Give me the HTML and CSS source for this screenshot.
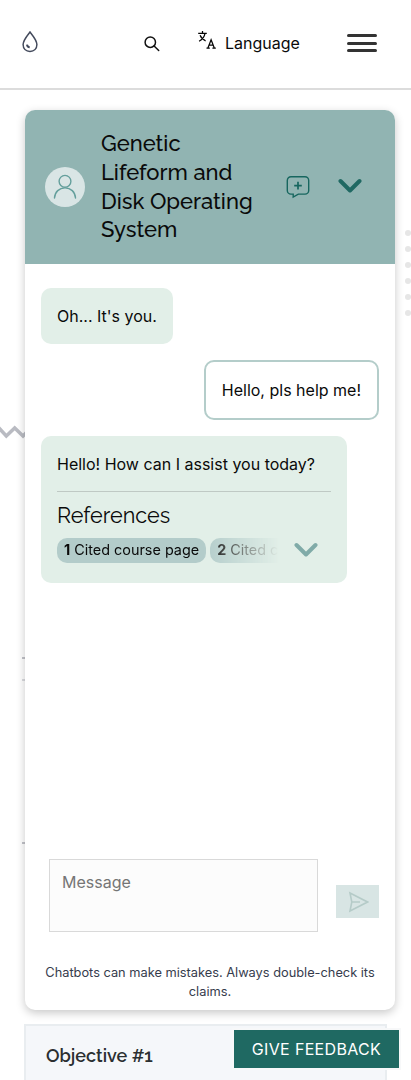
FILE: index.html
```html
<!DOCTYPE html>
<html lang="en">
<head>
<meta charset="utf-8">
<meta name="viewport" content="width=device-width">
<title>Course assistant</title>
<link rel="stylesheet" href="styles.css">
</head>
<body>
<div class="page">
  <header class="topbar">
    <svg class="logo" width="16" height="22" viewBox="0 0 16 22" fill="none" stroke="#434a5c" stroke-width="1.5"><path d="M8 1C5.6 4.2 1.1 9 1.1 13.6c0 4 2.8 6.8 6.9 6.8s6.9-2.800 6.900-6.800C14.900 9 10.400 4.200 8 1z"/><path d="M5 13.700c.2 1.600 1.200 2.500 2.700 2.600" stroke-width="2"/></svg>
    <svg class="search" width="16" height="16" viewBox="0 0 16 16" fill="none" stroke="#111" stroke-width="1.500" stroke-linecap="round"><circle cx="6.300" cy="6.200" r="5.200"/><path d="M10.100 10l4.600 4.500"/></svg>
    <div class="language">
      <svg width="19" height="19" viewBox="0 0 19 19" fill="none" stroke="#050505" stroke-width="1.250"><path d="M.2 2.300h8.600M4.500.1v2.200M7 2.300C6.400 5.600 4.300 8.500 1.100 10.200M2.100 4.300c1 2.500 3 4.500 5.500 5.500"/><path d="M9.900 17l3.200-8.300 3.200 8.300M10.900 14h4.500M8.500 17.200h3.300M14.400 17.200h3.400"/></svg>
      <span>Language</span>
    </div>
    <div class="menu"><i></i><i></i><i></i></div>
  </header>

  <svg class="zigzag" width="30" height="18" viewBox="0 0 30 18" fill="none" stroke="#b9bbc2" stroke-width="3.500"><path d="M-2 2l8.300 9L14.700 3l8.300 8 5-5"/></svg>
  <i class="tick tick-a"></i><i class="tick tick-b"></i><i class="tick tick-c"></i>
  <div class="dots"><i></i><i></i><i></i><i></i><i></i><i></i></div>

  <main class="chat">
    <div class="chat-head">
      <div class="avatar"><svg width="24" height="26" viewBox="0 0 24 26" fill="none" stroke="#649f9c" stroke-width="1.400" stroke-linecap="round"><circle cx="12" cy="7.800" r="5.900"/><path d="M1.500 24.500C1.900 18.300 6.200 14.400 12 14.400s10.100 3.900 10.500 10.100"/></svg></div>
      <h1 class="title">Genetic<br>Lifeform and<br>Disk Operating<br>System</h1>
      <svg class="new-chat" width="24" height="24" viewBox="0 0 24 24" fill="none" stroke="#17665f" stroke-width="1.400"><path d="M5 1.700h14a3.700 3.700 0 0 1 3.700 3.700v10a3.700 3.700 0 0 1-3.700 3.700h-6.700L7.200 22v-2.900H5a3.700 3.700 0 0 1-3.700-3.700v-10A3.700 3.700 0 0 1 5 1.700z"/><path d="M12 6.800v7.600M8.200 10.600h7.600" stroke-width="1.700"/></svg>
      <svg class="chevron" width="24" height="16" viewBox="0 0 24 16" fill="none" stroke="#206963" stroke-width="4" stroke-linecap="round" stroke-linejoin="round"><path d="M2.500 3l9.500 9.500L21.500 3"/></svg>
    </div>
    <div class="messages">
      <div class="bubble bot">Oh... It's you.</div>
      <div class="bubble user">Hello, pls help me!</div>
      <div class="bubble bot answer">
        <p>Hello! How can I assist you today?</p>
        <h2 class="refs-title">References</h2>
        <div class="refs">
          <div class="chips"><span class="chip"><b>1</b> Cited course page</span><span class="chip"><b>2</b> Cited c</span></div>
          <svg class="refs-chevron" width="24" height="16" viewBox="0 0 24 16" fill="none" stroke="#80aba8" stroke-width="4" stroke-linecap="round" stroke-linejoin="round"><path d="M2.500 3l9.500 9.500L21.500 3"/></svg>
        </div>
      </div>
    </div>
    <div class="composer">
      <div class="input">Message</div>
      <div class="send"><svg width="22" height="22" viewBox="0 0 22 22" fill="none" stroke="#b5cbc8" stroke-width="1.600"><path d="M3 2l17.500 9L3 20l1.800-9zM5 11h8"/></svg></div>
    </div>
    <p class="notice">Chatbots can make mistakes. Always double-check its claims.</p>
  </main>

  <section class="objective"><h2>Objective #1</h2></section>
  <div class="feedback">GIVE FEEDBACK</div>
</div>
</body>
</html>
```

FILE: styles.css
```css
* { box-sizing: border-box; }
body { margin: 0; background: #fff; font-family: Inter, "Liberation Sans", sans-serif; color: #0a0a0a; }
h1, h2, p { margin: 0; }
svg { display: block; flex: none; }
.page { position: relative; width: 411px; height: 1080px; overflow: hidden; }
.topbar { height: 90px; border-bottom: 2px solid #dcdcdc; display: flex; align-items: flex-start; }
.logo { margin: 31px 0 0 22px; }
.search { margin: 36px 0 0 106px; }
.language { display: flex; margin: 31px 0 0 38px; width: 103px; gap: 8px; font-size: 16px; line-height: 25px; }
.menu { margin: 34px 0 0 46px; width: 30px; display: grid; gap: 4.500px; }
.menu i { height: 3px; border-radius: 2px; background: #333; }
.zigzag { position: absolute; left: 0; top: 425px; }
.tick { position: absolute; left: 22px; width: 4px; height: 2px; background: #c2c3c9; }
.tick-a { top: 657px; }
.tick-b { top: 679px; background: #dadbdf; }
.tick-c { top: 842px; }
.dots { position: absolute; left: 405px; top: 230px; display: grid; gap: 10px; }
.dots i { width: 6px; height: 6px; border-radius: 50%; background: #e6e6e6; }

.chat { position: relative; margin: 20px 0 0 25px; width: 370px; height: 900px; border-radius: 10px; background: #fff; box-shadow: 0 3px 10px rgba(0, 0, 0, .22); display: flex; flex-direction: column; }
.chat-head { height: 154px; flex: none; background: #91b4b2; border-radius: 10px 10px 0 0; display: flex; align-items: center; padding-left: 20px; }
.avatar { width: 40px; height: 40px; border-radius: 50%; background: #d9e5e5; display: grid; place-items: center; }
.avatar svg { transform: translateY(-.5px); }
.title { margin: -1px 0 0 16px; width: 185px; font: 500 22px/28.600px Raleway, Lato, sans-serif; white-space: nowrap; }
.chevron { margin: -2px 0 0 27.500px; }
.messages { height: 581px; padding: 24px 16px 0; display: flex; flex-direction: column; align-items: flex-start; gap: 16px; }
.bubble { border-radius: 10px; padding: 16px; font-size: 16px; line-height: 24px; white-space: nowrap; }
.bot { background: #e2efe8; }
.user { align-self: flex-end; border: 2px solid #b4cdca; background: #fff; }
.answer { width: 306px; height: 147px; }
.answer p { padding-bottom: 15px; border-bottom: 1px solid #bfc9c4; }
.refs-title { margin-top: 10px; font: 400 21.600px/28px Raleway, Lato, sans-serif; }
.refs { display: flex; align-items: center; margin-top: 7px; height: 26px; }
.chips { width: 222px; height: 25px; display: flex; gap: 4px; -webkit-mask-image: linear-gradient(90deg, #000 66%, transparent 100%); mask-image: linear-gradient(90deg, #000 66%, transparent 100%); }
.chip { flex: none; height: 25px; border-radius: 10px; padding: 0 7px; background: #b3ccca; font-size: 14.400px; line-height: 24px; }
.chip:last-child { flex: 1 0 0; border-radius: 10px 0 0 10px; padding-right: 0; }
.refs-chevron { margin-left: 14.500px; }
.composer { margin: 14px 16px 0 24px; display: flex; align-items: center; justify-content: space-between; }
.input { width: 269px; height: 73px; border: 1px solid #d9d9d9; background: #fcfcfc; padding: 10px 12px; font-size: 16px; line-height: 24px; color: #757575; }
.send { width: 43px; height: 33px; margin-top: 12px; background: #d8e5e4; display: grid; place-items: center; }
.notice { margin: 31px 16px 0; text-align: center; font-size: 12.800px; line-height: 19.200px; color: #363c4d; }

.objective { margin: 14px 0 0 24px; width: 363px; height: 80px; border: 2px solid #e9edf0; background: #f5f7fa; padding: 17px 20px; }
.objective h2 { font: 600 18px/26px Raleway, Lato, sans-serif; color: #2b2f31; }
.feedback { position: absolute; left: 234px; top: 1030px; width: 165px; height: 38px; background: #1f6962; color: #fff; text-align: center; font-size: 16px; line-height: 39px; letter-spacing: .33px; box-shadow: 0 0 0 2px #f7f8f9; }
```
